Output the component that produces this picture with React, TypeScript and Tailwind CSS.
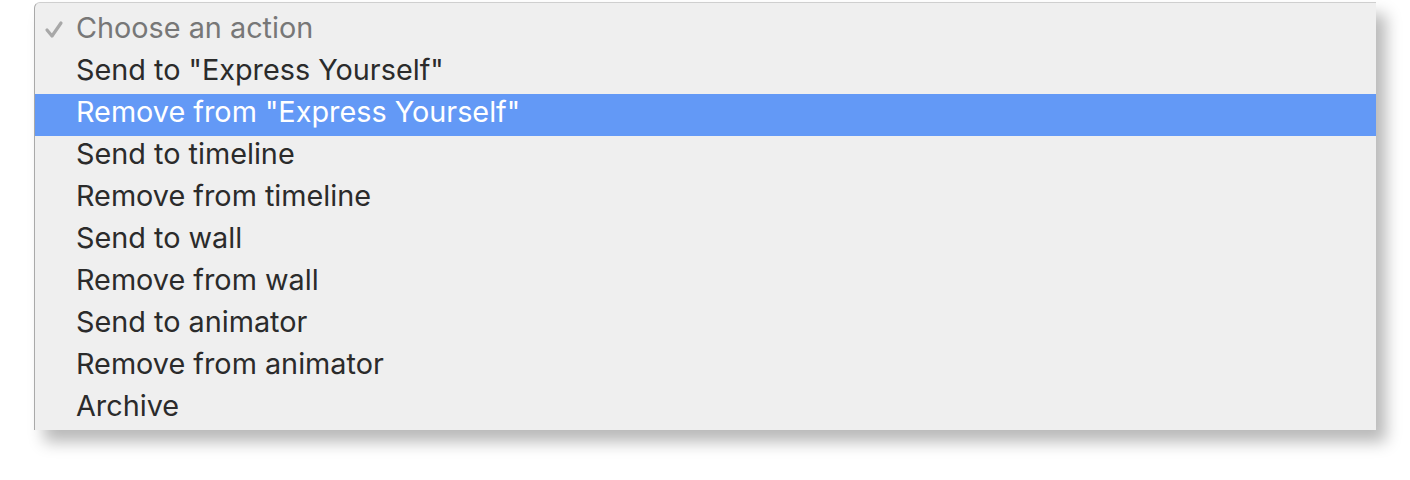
const actions = [
  'Send to "Express Yourself"',
  'Remove from "Express Yourself"',
  "Send to timeline",
  "Remove from timeline",
  "Send to wall",
  "Remove from wall",
  "Send to animator",
  "Remove from animator",
  "Archive",
];

export default function App() {
  return (
    <div className="w-[1410px] h-[480px] bg-white pt-[2px] pl-[34px]">
      <div
        className="w-[1342px] bg-[#efefef] pt-[7px] border-l border-t border-l-[#a9a9a9] border-t-[#cfcfcf] rounded-tl-[6px] shadow-[10px_12px_16px_rgba(0,0,0,0.28)]"
        style={{ fontFamily: "Inter, 'Liberation Sans', sans-serif" }}
      >
        {/* placeholder option */}
        <div className="h-[42px] flex items-center pb-[6px] text-[28.8px] text-[#777777]">
          <svg width="41" height="42" viewBox="0 0 41 42" className="shrink-0 self-start">
            <path d="M12 20 L17 26 L26 13" fill="none" stroke="#a8a8a8" strokeWidth="3.2" strokeLinecap="round" strokeLinejoin="round" />
          </svg>
          <span>Choose an action</span>
        </div>
        {actions.map((label, i) => (
          <div
            key={label}
            className={
              i === 1
                ? "h-[42px] flex items-center pb-[6px] pl-[41px] text-[28.8px] bg-[#6399f6] text-white"
                : "h-[42px] flex items-center pb-[6px] pl-[41px] text-[28.8px] text-[#2b2b2b]"
            }
          >
            {label}
          </div>
        ))}
      </div>
    </div>
  );
}
